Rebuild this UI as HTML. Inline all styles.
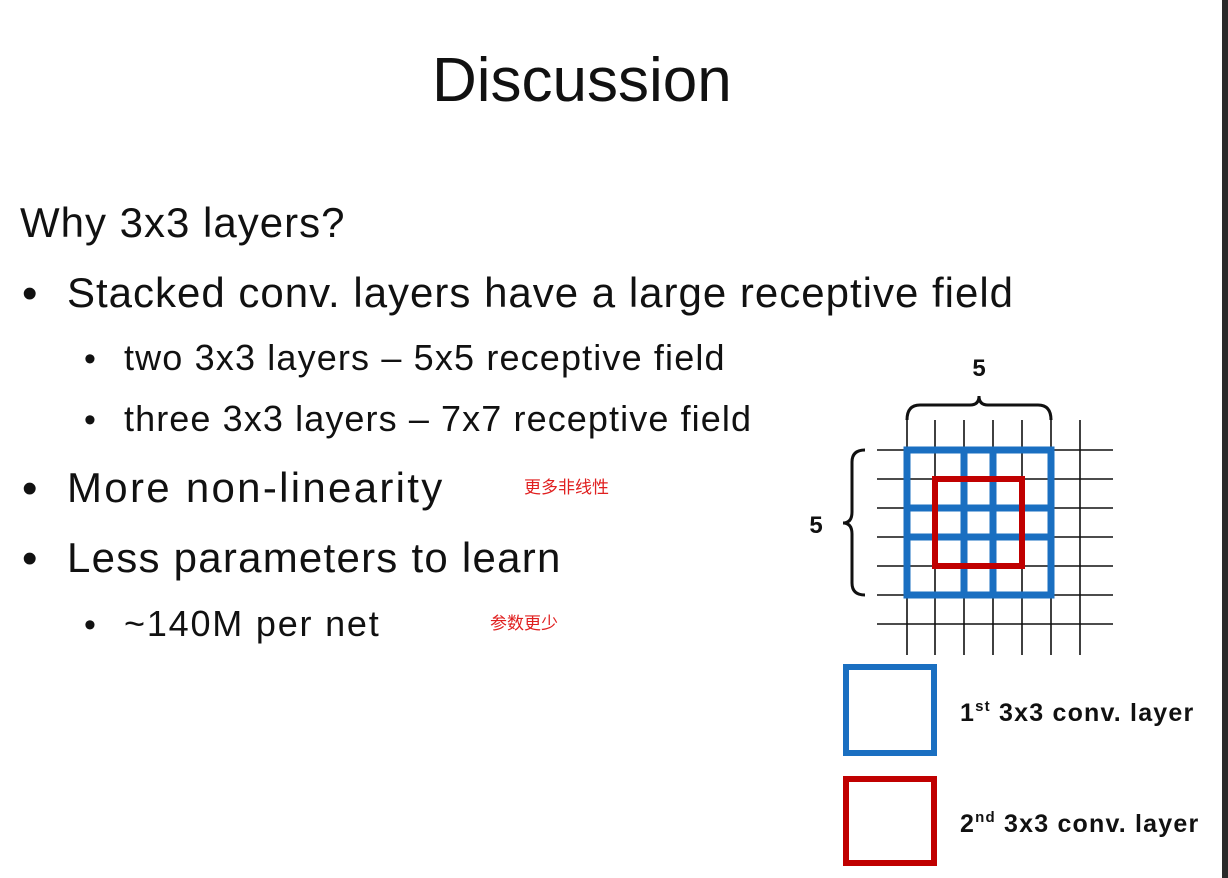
<!DOCTYPE html>
<html><head><meta charset="utf-8"><style>
html,body{margin:0;padding:0;}
body{width:1228px;height:878px;background:#fff;position:relative;overflow:hidden;font-family:"Liberation Sans",sans-serif;color:#111;}
.t{position:absolute;white-space:nowrap;line-height:1;}
.strip{position:absolute;right:0;top:0;width:6px;height:878px;background:#2a2a2a;}
.cn{font-family:"Liberation Sans","Noto Sans CJK SC",sans-serif;color:#e02020;font-size:17px;}
</style></head><body>
<div class="t" style="left:432px;top:50px;font-size:62px;">Discussion</div>
<div class="t" style="left:20px;top:202px;font-size:42px;letter-spacing:1px;">Why 3x3 layers?</div>
<div class="t" style="left:22px;top:272px;font-size:44px;">•</div>
<div class="t" style="left:67px;top:272px;font-size:42px;letter-spacing:1px;">Stacked conv. layers have a large receptive field</div>
<div class="t" style="left:84px;top:342px;font-size:34px;">•</div>
<div class="t" style="left:124px;top:340px;font-size:36px;letter-spacing:1.15px;">two 3x3 layers – 5x5 receptive field</div>
<div class="t" style="left:84px;top:403px;font-size:34px;">•</div>
<div class="t" style="left:124px;top:401px;font-size:36px;letter-spacing:1.1px;">three 3x3 layers – 7x7 receptive field</div>
<div class="t" style="left:22px;top:467px;font-size:44px;">•</div>
<div class="t" style="left:67px;top:467px;font-size:42px;letter-spacing:2.3px;">More non-linearity</div>
<div class="t cn" style="left:524px;top:479px;">更多非线性</div>
<div class="t" style="left:22px;top:537px;font-size:44px;">•</div>
<div class="t" style="left:67px;top:537px;font-size:42px;letter-spacing:1.25px;">Less parameters to learn</div>
<div class="t" style="left:84px;top:608px;font-size:34px;">•</div>
<div class="t" style="left:124px;top:606px;font-size:36px;letter-spacing:1.8px;">~140M per net</div>
<div class="t cn" style="left:490px;top:615px;">参数更少</div>

<svg style="position:absolute;left:0;top:0" width="1228" height="878">
<g stroke="#111" stroke-width="1.6">
<line x1="907" y1="420" x2="907" y2="655"/><line x1="935" y1="420" x2="935" y2="655"/>
<line x1="964" y1="420" x2="964" y2="655"/><line x1="993" y1="420" x2="993" y2="655"/>
<line x1="1022" y1="420" x2="1022" y2="655"/><line x1="1051" y1="420" x2="1051" y2="655"/>
<line x1="1080" y1="420" x2="1080" y2="655"/>
<line x1="877" y1="450" x2="1113" y2="450"/><line x1="877" y1="479" x2="1113" y2="479"/>
<line x1="877" y1="508" x2="1113" y2="508"/><line x1="877" y1="537" x2="1113" y2="537"/>
<line x1="877" y1="566" x2="1113" y2="566"/><line x1="877" y1="595" x2="1113" y2="595"/>
<line x1="877" y1="624" x2="1113" y2="624"/>
</g>
<g stroke="#1a6fc1" stroke-width="7" fill="none">
<rect x="907" y="450" width="144" height="145"/>
<line x1="964" y1="450" x2="964" y2="595"/><line x1="993" y1="450" x2="993" y2="595"/>
<line x1="907" y1="508" x2="1051" y2="508"/><line x1="907" y1="537" x2="1051" y2="537"/>
</g>
<rect x="935" y="479" width="87" height="87" stroke="#c00000" stroke-width="6" fill="none"/>
<g stroke="#111" stroke-width="3" fill="none">
<path d="M907 420 Q907 405 920 405 L970 405 Q979 405 979 396 Q979 405 988 405 L1038 405 Q1051 405 1051 420"/>
<path d="M865 450 Q852 450 852 462 L852 512 Q852 523 843 523 Q852 523 852 534 L852 583 Q852 595 865 595"/>
</g>
<text x="979" y="376" font-family="Liberation Sans" font-weight="bold" font-size="24" text-anchor="middle" fill="#111">5</text>
<text x="816" y="533" font-family="Liberation Sans" font-weight="bold" font-size="24" text-anchor="middle" fill="#111">5</text>
<rect x="846" y="667" width="88" height="86" stroke="#1a6fc1" stroke-width="6" fill="none"/>
<rect x="846" y="779" width="88" height="84" stroke="#c00000" stroke-width="6" fill="none"/>
<g font-family="Liberation Sans" font-weight="bold" fill="#111" letter-spacing="1.2">
<text x="960" y="721" font-size="25">1<tspan font-size="15" dy="-10">st</tspan><tspan dy="10"> 3x3 conv. layer</tspan></text>
<text x="960" y="832" font-size="25">2<tspan font-size="15" dy="-10">nd</tspan><tspan dy="10"> 3x3 conv. layer</tspan></text>
</g>
</svg>
<div class="strip"></div>
</body></html>
